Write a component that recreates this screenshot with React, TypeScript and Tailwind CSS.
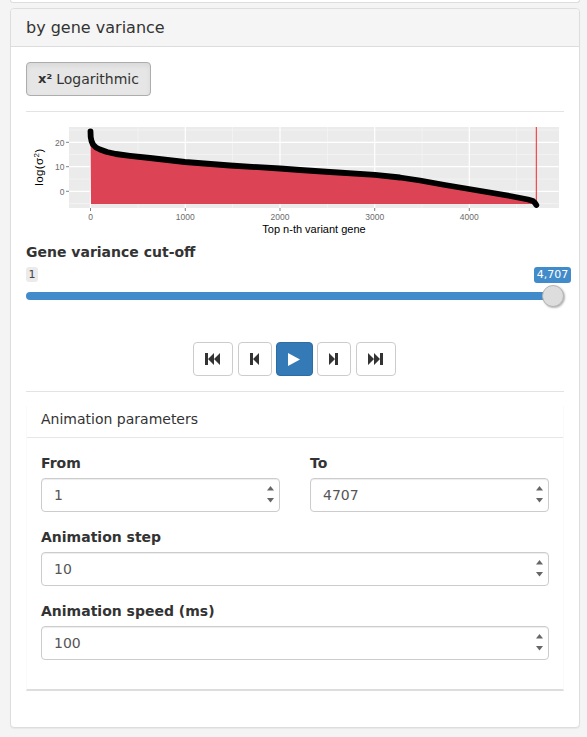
const curve: [number, number][] = [
  [90.5, 131.5], [90.7, 137], [91.5, 141], [93, 144.5], [96, 147.5], [100, 149.5], [107, 152],
  [116, 154], [130, 155.8], [150, 158], [185, 162], [230, 165.5], [280, 168.5], [300, 170],
  [330, 172], [375, 174.8], [400, 177.5], [420, 180.5], [445, 185], [469, 189], [510, 196], [528, 199.5], [533, 201],
  [535, 203], [536.3, 205],
]

const line = curve.map((p) => p.join(',')).join(' ')
const minorX = [138, 232.5, 327.5, 422, 516.5]
const majorX = [90.5, 185.3, 280, 374.7, 469.3]
const minorY = [130, 154.5, 179, 203.5]
const majorY = [142.3, 166.7, 191.3]

function VarianceChart() {
  return (
    <svg width="538" height="118" viewBox="26 122 538 118" className="block" style={{ fontFamily: '"Liberation Sans", sans-serif' }}>
      <rect x="69" y="127" width="490" height="81" fill="#ebebeb" />
      {minorX.map((x) => <line key={x} x1={x} x2={x} y1="127" y2="208" stroke="#f5f5f5" strokeWidth="0.7" />)}
      {minorY.map((y) => <line key={y} x1="69" x2="559" y1={y} y2={y} stroke="#f5f5f5" strokeWidth="0.7" />)}
      {majorX.map((x) => <line key={x} x1={x} x2={x} y1="127" y2="208" stroke="#fff" strokeWidth="1.2" />)}
      {majorY.map((y) => <line key={y} x1="69" x2="559" y1={y} y2={y} stroke="#fff" strokeWidth="1.2" />)}
      <polygon points={`91,204 ${line} 536.3,204`} fill="#dc4455" />
      <line x1="536.3" x2="536.3" y1="127" y2="208" stroke="#f8232b" strokeWidth="1" />
      <polyline points={line} fill="none" stroke="#000" strokeWidth="5.8" strokeLinejoin="round" strokeLinecap="round" />
      {majorY.map((y) => <line key={y} x1="66" x2="69" y1={y} y2={y} stroke="#4d4d4d" strokeWidth="0.7" />)}
      {majorX.map((x) => <line key={x} x1={x} x2={x} y1="208" y2="211" stroke="#4d4d4d" strokeWidth="0.7" />)}
      <g fill="#6b6b6b" fontSize="8.5" textAnchor="end">
        <text x="64.5" y="145.5">20</text>
        <text x="64.5" y="170">10</text>
        <text x="64.5" y="194.5">0</text>
      </g>
      <g fill="#6b6b6b" fontSize="8.5" textAnchor="middle">
        {['0', '1000', '2000', '3000', '4000'].map((t, i) => <text key={t} x={majorX[i]} y="219.5">{t}</text>)}
      </g>
      <text x="314" y="233" fontSize="11" textAnchor="middle" fill="#000">Top n-th variant gene</text>
      <text transform="translate(43 167) rotate(-90)" fontSize="11.5" textAnchor="middle" fill="#000" letterSpacing="0.4">
        log(σ<tspan dy="-4" fontSize="8">2</tspan><tspan dy="4">)</tspan>
      </text>
    </svg>
  )
}

function PlayerButton({ className, children }: { className: string; children: React.ReactNode }) {
  return (
    <button className={`h-[34px] flex items-center justify-center rounded-[4px] border ${className}`}>
      {children}
    </button>
  )
}

function NumberField({ value }: { value: string }) {
  return (
    <div className="relative">
      <input
        type="text"
        readOnly
        value={value}
        className="block w-full h-[34px] px-3 rounded-[4px] border border-[#cccccc] bg-white text-[14px] text-[#555555] shadow-[inset_0_1px_1px_rgba(0,0,0,0.075)] outline-none"
      />
      <svg width="7" height="17" viewBox="0 0 7 17" className="absolute right-[6px] top-[8px]">
        <polygon points="3.5,0 7,4.5 0,4.5" fill="#666666" />
        <polygon points="0,12 7,12 3.5,16.5" fill="#666666" />
      </svg>
    </div>
  )
}

function Field({ label, value }: { label: string; value: string }) {
  return (
    <div className="flex flex-col gap-[5px]">
      <label className="text-[14px] leading-[20px] font-bold text-[#333333]">{label}</label>
      <NumberField value={value} />
    </div>
  )
}

export default function App() {
  return (
    <div className="w-[587px] h-[737px] overflow-hidden bg-[#f4f4f4] pl-[10px] pr-[7px] text-[#333333]" style={{ fontFamily: '"DejaVu Sans", sans-serif' }}>
      <div className="h-[3px] bg-white border-b border-x border-[#dddddd] rounded-b-[4px]" />

      <div className="mt-[5px] h-[720px] bg-white border border-[#dddddd] rounded-[4px] shadow-[0_1px_1px_rgba(0,0,0,0.05)]">
        <div className="h-[38px] px-[15px] flex items-center bg-[#f5f5f5] border-b border-[#dddddd] rounded-t-[3px] text-[16px]">
          by gene variance
        </div>

        <div className="px-[15px] pt-[15px]">
          <button className="h-[34px] w-[125px] flex items-center justify-center gap-[4px] rounded-[4px] border border-[#adadad] bg-[#e6e6e6] text-[14px] shadow-[inset_0_3px_5px_rgba(0,0,0,0.06)]">
            <span className="font-bold text-[13px]">x²</span>
            <span>Logarithmic</span>
          </button>

          <hr className="mt-[15px] border-t border-[#e3e3e3]" />

          <div className="mt-[10px]">
            <VarianceChart />
          </div>

          <div className="mt-[2px] text-[14px] leading-[20px] font-bold">Gene variance cut-off</div>

          <div className="relative h-[50px] mt-[5px]">
            <div className="absolute left-0 top-0 h-[15px] w-[12px] rounded-[3px] bg-[#ebebeb] text-[11px] leading-[15px] text-center text-[#444444]">1</div>
            <div className="absolute left-[508px] top-0 h-[16px] w-[37px] rounded-[3px] bg-[#428bca] text-[11px] leading-[16px] text-center text-white">4,707</div>
            <div className="absolute left-0 top-[25px] h-[8px] w-[527px] rounded-[4px] bg-[#428bca]" />
            <div className="absolute left-[516px] top-[18px] h-[22px] w-[22px] rounded-full border border-[#b5b5b5] bg-[#dddddd] shadow-[1px_1px_2px_rgba(0,0,0,0.3)]" />
          </div>

          <div className="mt-[25px] pr-[2px] flex justify-center gap-[5px]">
            <PlayerButton className="w-[40px] border-[#cccccc] bg-white">
              <svg width="15" height="12" viewBox="0 0 15 12" fill="#333333"><path d="M0 0h3v12H0zM3 6l6-6v12zM9 6l6-6v12z" /></svg>
            </PlayerButton>
            <PlayerButton className="w-[34px] border-[#cccccc] bg-white">
              <svg width="9" height="12" viewBox="0 0 9 12" fill="#333333"><path d="M0 0h3v12H0zM3 6l6-6v12z" /></svg>
            </PlayerButton>
            <PlayerButton className="w-[37px] -mx-[1px] border-[#2e6da4] bg-[#337ab7]">
              <svg width="12" height="13" viewBox="0 0 12 13" fill="#ffffff"><path d="M0 0l12 6.500L0 13z" /></svg>
            </PlayerButton>
            <PlayerButton className="w-[34px] border-[#cccccc] bg-white">
              <svg width="9" height="12" viewBox="0 0 9 12" fill="#333333"><path d="M9 0H6v12h3zM6 6L0 0v12z" /></svg>
            </PlayerButton>
            <PlayerButton className="w-[40px] border-[#cccccc] bg-white">
              <svg width="15" height="12" viewBox="0 0 15 12" fill="#333333"><path d="M15 0h-3v12h3zM12 6L6 0v12zM6 6L0 0v12z" /></svg>
            </PlayerButton>
          </div>

          <hr className="mt-[15px] border-t border-[#e3e3e3]" />

          <div className="mt-[14px] h-[285px] bg-white border-x border-b-[2px] border-x-[#fafafa] border-b-[#dddddd]">
            <div className="h-[32px] px-[14px] border-b border-[#e6e6e6] text-[14px] leading-[26px]">Animation parameters</div>
            <div className="px-[14px] pt-[15px] flex flex-col gap-[15px]">
              <div className="grid grid-cols-2 gap-[30px]">
                <Field label="From" value="1" />
                <Field label="To" value="4707" />
              </div>
              <Field label="Animation step" value="10" />
              <Field label="Animation speed (ms)" value="100" />
            </div>
          </div>
        </div>
      </div>
    </div>
  )
}
